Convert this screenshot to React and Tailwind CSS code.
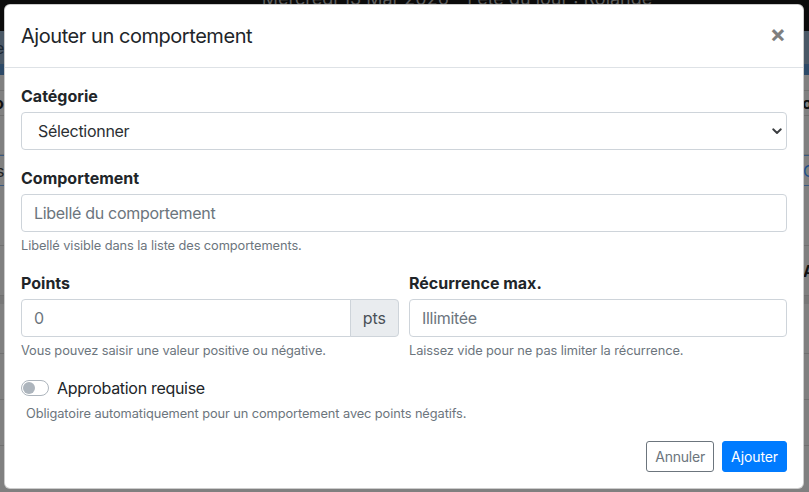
import React from 'react';

// Background page rows (already dimmed by the modal backdrop)
const BackdropPage = () => (
  <div className="flex flex-col h-full">
    <div className="h-[31px] bg-[#0b0b0b] flex justify-center pl-[105px] overflow-hidden">
      <span className="-mt-[13px] text-[18px] leading-[24px] text-[#5c5c5c] whitespace-nowrap">
        Mercredi 13 Mar 2026 - Fête du jour : Rolande
      </span>
    </div>
    <div className="h-[33px] bg-[#4a5866] flex items-center justify-between text-[16px] text-[#1b2733]">
      <span className="-ml-[5px]">e</span>
      <span />
    </div>
    <div className="h-[11px] bg-[#2d4a68]" />
    <div className="flex-1 bg-[#808080] flex flex-col text-[16px]">
      <div className="h-[16px] border-b border-[#707070]" />
      <div className="h-[25px] border-b border-[#707070] flex items-center justify-between font-bold text-[#111]">
        <span className="-ml-[6px]">o</span>
        <span className="-mr-[3px]">o</span>
      </div>
      <div className="h-[39px] border-b border-[#707070]" />
      <div className="h-[31px] border-y border-[#3a5a80] flex items-center justify-between">
        <span className="-ml-[4px] text-[#222]">s</span>
        <span className="-mr-[6px] text-[#1f4f8a]">G</span>
      </div>
      <div className="h-[60px] border-b border-[#707070]" />
      <div className="h-[50px] border-b border-[#707070] flex items-center justify-end font-bold text-[#111]">
        <span className="-mr-[6px]">A</span>
      </div>
      <div className="h-[8px] bg-[#777]" />
      <div className="h-[50px] border-b border-[#707070]" />
      <div className="h-[46px] border-b border-[#707070]" />
      <div className="h-[46px] border-b border-[#707070]" />
    </div>
  </div>
);

const inputCls =
  'h-[38px] w-full px-3 border border-[#ced4da] rounded-[4px] text-[16px] tracking-[-0.3px] text-[#495057] placeholder:text-[#6c757d] bg-white outline-none';

const HelpText = ({ children, className = '' }) => (
  <p className={`mt-1 text-[12.8px] leading-[19.2px] tracking-[-0.08px] text-[#6c757d] ${className}`}>{children}</p>
);

const Label = ({ children }) => (
  <label className="block mb-1 text-[16px] leading-[24px] font-bold text-[#212529]">{children}</label>
);

export default function App() {
  return (
    <div className="relative w-[809px] h-[492px] overflow-hidden font-['Inter',sans-serif]">
      <BackdropPage />

      {/* Modal */}
      <div className="absolute left-[4px] top-[4px] w-[800px] bg-white border border-black/20 rounded-[6px] text-[#212529]">
        {/* Header */}
        <div className="flex items-start justify-between px-4 py-4 border-b border-[#dee2e6]">
          <h5 className="text-[20px] leading-[30px] font-normal tracking-[-0.45px]">Ajouter un comportement</h5>
          <button className="text-[24px] leading-[30px] font-bold text-black opacity-50 -mt-[2px] mr-[1px]">×</button>
        </div>

        {/* Body */}
        <div className="px-4 pt-4">
          <div className="mb-4">
            <Label>Catégorie</Label>
            <div className="h-[38px] flex items-center justify-between pl-4 pr-1 border border-[#ced4da] rounded-[4px] text-[16px] tracking-[-0.3px] text-[#2b2f33]">
              <span>Sélectionner</span>
              <svg width="10" height="7" viewBox="0 0 10 7" fill="none">
                <path d="M1.2 1.3 L5 5 L8.8 1.3" stroke="#3a3d40" strokeWidth="1.9" strokeLinecap="round" strokeLinejoin="round" />
              </svg>
            </div>
          </div>

          <div className="mb-4">
            <Label>Comportement</Label>
            <input className={inputCls} placeholder="Libellé du comportement" />
            <HelpText>Libellé visible dans la liste des comportements.</HelpText>
          </div>

          <div className="mb-4 grid grid-cols-2 gap-x-[10px]">
            <div>
              <Label>Points</Label>
              <div className="flex">
                <input
                  className="h-[38px] flex-1 min-w-0 px-3 border border-[#ced4da] rounded-l-[4px] text-[16px] text-[#495057] placeholder:text-[#6c757d] outline-none"
                  placeholder="0"
                />
                <span className="h-[38px] flex items-center px-3 -ml-px bg-[#e9ecef] border border-[#ced4da] rounded-r-[4px] text-[16px] text-[#495057]">
                  pts
                </span>
              </div>
              <HelpText>Vous pouvez saisir une valeur positive ou négative.</HelpText>
            </div>
            <div>
              <Label>Récurrence max.</Label>
              <input className={inputCls} placeholder="Illimitée" />
              <HelpText>Laissez vide pour ne pas limiter la récurrence.</HelpText>
            </div>
          </div>

          <div>
            <div className="flex items-center gap-2 h-[24px]">
              <span className="w-[28px] h-4 rounded-full border border-[#adb5bd] bg-white flex items-center pl-px">
                <span className="w-3 h-3 rounded-full bg-[#adb5bd]" />
              </span>
              <span className="text-[16px] leading-[24px] tracking-[-0.3px]">Approbation requise</span>
            </div>
            <HelpText className="pl-[5px]">
              Obligatoire automatiquement pour un comportement avec points négatifs.
            </HelpText>
          </div>
        </div>

        {/* Footer */}
        <div className="flex justify-end gap-2 px-4 pt-[17px] pb-4">
          <button className="h-[31px] px-2 border border-[#6c757d] rounded-[3px] text-[14px] leading-[21px] tracking-[-0.2px] text-[#6c757d] bg-white">
            Annuler
          </button>
          <button className="h-[31px] px-2 border border-[#007bff] rounded-[3px] text-[14px] leading-[21px] tracking-[-0.1px] text-white bg-[#007bff]">
            Ajouter
          </button>
        </div>
      </div>
    </div>
  );
}
